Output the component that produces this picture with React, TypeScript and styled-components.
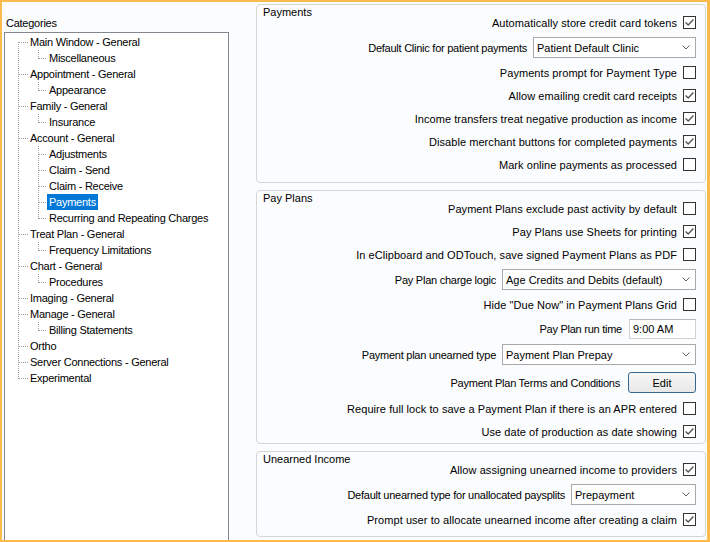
import React from 'react';
import styled, { createGlobalStyle } from 'styled-components';

const GlobalStyle = createGlobalStyle`
  html, body { margin: 0; padding: 0; }
  body {
    font-family: "Liberation Sans", Arial, sans-serif;
    font-size: 11px;
    color: #000;
  }
`;

const Frame = styled.div`
  width: 710px;
  height: 542px;
  box-sizing: border-box;
  border: 2px solid #fdbb4d;
  border-right-width: 3px;
  background: #fbfcfe;
  display: flex;
  overflow: hidden;
`;

const LeftColumn = styled.div`
  width: 225px;
  margin-left: 2px;
  padding-top: 14px;
  display: flex;
  flex-direction: column;
`;

const CategoryLabel = styled.div`
  height: 16px;
  line-height: 14px;
  padding-left: 2px;
  letter-spacing: -0.25px;
`;

const TreeBox = styled.div`
  flex: 1;
  background: #fff;
  border: 1px solid #828790;
  border-bottom: none;
  padding-top: 1px;
`;

const TreeRow = styled.div<{ $level: number }>`
  position: relative;
  height: 16px;
  display: flex;
  align-items: center;
  padding-left: ${(p) => (p.$level === 0 ? 23 : 42)}px;
  white-space: nowrap;
`;

const ItemText = styled.span<{ $selected?: boolean }>`
  padding: 0 2px;
  height: 16px;
  line-height: 16px;
  letter-spacing: -0.25px;
  background: ${(p) => (p.$selected ? '#0078d7' : 'transparent')};
  color: ${(p) => (p.$selected ? '#fff' : '#000')};
`;

const VDots = styled.span<{ $x: number; $top: number; $h: number }>`
  position: absolute;
  left: ${(p) => p.$x}px;
  top: ${(p) => p.$top}px;
  height: ${(p) => p.$h}px;
  width: 1px;
  background-image: repeating-linear-gradient(to bottom, #a0a0a0 0 1px, transparent 1px 2px);
`;

const HDots = styled.span<{ $x: number; $w: number }>`
  position: absolute;
  left: ${(p) => p.$x}px;
  top: 8px;
  width: ${(p) => p.$w}px;
  height: 1px;
  background-image: repeating-linear-gradient(to right, #a0a0a0 0 1px, transparent 1px 2px);
`;

const RightColumn = styled.div`
  width: 450px;
  margin-left: 27px;
  padding-top: 2px;
  display: flex;
  flex-direction: column;
  gap: 7px;
`;

const Group = styled.section<{ $height: number }>`
  height: ${(p) => p.$height}px;
  box-sizing: border-box;
  border: 1px solid #d6d6d6;
  border-radius: 4px;
  display: flex;
  flex-direction: column;
`;

const GroupTitle = styled.div`
  height: 6px;
  line-height: 14px;
  padding-left: 6px;
  white-space: nowrap;
  overflow: visible;
`;

const Row = styled.div<{ $h: number }>`
  height: ${(p) => p.$h}px;
  flex-shrink: 0;
  display: flex;
  align-items: center;
  justify-content: flex-end;
  gap: 6px;
  padding-right: 9px;
  white-space: nowrap;
`;

const CheckLabel = styled.span`
  line-height: 14px;
  letter-spacing: 0.06px;
`;

const Label = styled.span<{ $gap?: number }>`
  line-height: 14px;
  letter-spacing: -0.25px;
  margin-right: ${(p) => p.$gap ?? 0}px;
`;

const Select = styled.div<{ $w: number }>`
  width: ${(p) => p.$w}px;
  height: 21px;
  box-sizing: border-box;
  border: 1px solid #a9a9a9;
  background: #fff;
  display: flex;
  align-items: center;
  justify-content: space-between;
  padding: 0 5px 0 3px;
`;

const TextBox = styled.div`
  width: 67px;
  height: 20px;
  box-sizing: border-box;
  border: 1px solid #d2d2d2;
  border-top-color: #b8b8b8;
  background: #fff;
  display: flex;
  align-items: center;
  padding-left: 3px;
`;

const Button = styled.button`
  width: 68px;
  height: 21px;
  box-sizing: border-box;
  border: 1px solid #39678f;
  border-radius: 3px;
  background: linear-gradient(to bottom, #f7f7f7, #e8e8e8);
  font: inherit;
  color: #000;
  padding: 0;
  line-height: 18px;
`;

const Check = ({ checked }: { checked: boolean }) => (
  <svg width="13" height="13" viewBox="0 0 13 13" style={{ flexShrink: 0 }}>
    <rect x="0.5" y="0.5" width="12" height="12" fill="#fff" stroke="#333" />
    {checked && (
      <polyline points="2.6,6.4 5.2,9 10.4,3.6" fill="none" stroke="#555" strokeWidth="1.4" />
    )}
  </svg>
);

const Chevron = () => (
  <svg width="8" height="5" viewBox="0 0 8 5">
    <polyline points="0.5,0.5 4,4 7.5,0.5" fill="none" stroke="#606060" strokeWidth="1" />
  </svg>
);

type TreeNode = { label: string; children?: string[] };

const tree: TreeNode[] = [
  { label: 'Main Window - General', children: ['Miscellaneous'] },
  { label: 'Appointment - General', children: ['Appearance'] },
  { label: 'Family - General', children: ['Insurance'] },
  {
    label: 'Account - General',
    children: ['Adjustments', 'Claim - Send', 'Claim - Receive', 'Payments', 'Recurring and Repeating Charges'],
  },
  { label: 'Treat Plan - General', children: ['Frequency Limitations'] },
  { label: 'Chart - General', children: ['Procedures'] },
  { label: 'Imaging - General' },
  { label: 'Manage - General', children: ['Billing Statements'] },
  { label: 'Ortho' },
  { label: 'Server Connections - General' },
  { label: 'Experimental' },
];

type FlatRow = { label: string; level: number; lastChild: boolean };

const flatRows: FlatRow[] = [];
tree.forEach((n) => {
  flatRows.push({ label: n.label, level: 0, lastChild: false });
  (n.children || []).forEach((c, i, arr) =>
    flatRows.push({ label: c, level: 1, lastChild: i === arr.length - 1 })
  );
});

const Tree = () => (
  <TreeBox>
    {flatRows.map((r, i) => {
      const first = i === 0;
      const last = i === flatRows.length - 1;
      return (
        <TreeRow key={r.label} $level={r.level}>
          <VDots $x={13} $top={first ? 8 : 0} $h={first ? 8 : last ? 9 : 16} />
          {r.level === 0 ? (
            <HDots $x={14} $w={9} />
          ) : (
            <>
              <VDots $x={33} $top={0} $h={r.lastChild ? 9 : 16} />
              <HDots $x={34} $w={8} />
            </>
          )}
          <ItemText $selected={r.label === 'Payments'}>{r.label}</ItemText>
        </TreeRow>
      );
    })}
  </TreeBox>
);

const CheckRow = ({ label, checked, h = 23 }: { label: string; checked: boolean; h?: number }) => (
  <Row $h={h}>
    <CheckLabel>{label}</CheckLabel>
    <Check checked={checked} />
  </Row>
);

const SelectRow = ({ label, value, w, h = 27 }: { label: string; value: string; w: number; h?: number }) => (
  <Row $h={h}>
    <Label>{label}</Label>
    <Select $w={w}>
      <span>{value}</span>
      <Chevron />
    </Select>
  </Row>
);

export default function App() {
  return (
    <>
      <GlobalStyle />
      <Frame>
        <LeftColumn>
          <CategoryLabel>Categories</CategoryLabel>
          <Tree />
        </LeftColumn>
        <RightColumn>
          <Group $height={179}>
            <GroupTitle>Payments</GroupTitle>
            <CheckRow label="Automatically store credit card tokens" checked />
            <SelectRow label="Default Clinic for patient payments" value="Patient Default Clinic" w={163} />
            <CheckRow label="Payments prompt for Payment Type" checked={false} />
            <CheckRow label="Allow emailing credit card receipts" checked />
            <CheckRow label="Income transfers treat negative production as income" checked />
            <CheckRow label="Disable merchant buttons for completed payments" checked />
            <CheckRow label="Mark online payments as processed" checked={false} />
          </Group>
          <Group $height={254}>
            <GroupTitle>Pay Plans</GroupTitle>
            <CheckRow label="Payment Plans exclude past activity by default" checked={false} />
            <CheckRow label="Pay Plans use Sheets for printing" checked />
            <CheckRow label="In eClipboard and ODTouch, save signed Payment Plans as PDF" checked={false} />
            <SelectRow label="Pay Plan charge logic" value="Age Credits and Debits (default)" w={194} />
            <CheckRow label={'Hide "Due Now" in Payment Plans Grid'} checked={false} />
            <Row $h={25}>
              <Label $gap={1}>Pay Plan run time</Label>
              <TextBox>9:00 AM</TextBox>
            </Row>
            <SelectRow label="Payment plan unearned type" value="Payment Plan Prepay" w={194} />
            <Row $h={29}>
              <Label $gap={2}>Payment Plan Terms and Conditions</Label>
              <Button>Edit</Button>
            </Row>
            <CheckRow label="Require full lock to save a Payment Plan if there is an APR entered" checked={false} />
            <CheckRow label="Use date of production as date showing" checked />
          </Group>
          <Group $height={86}>
            <GroupTitle>Unearned Income</GroupTitle>
            <CheckRow label="Allow assigning unearned income to providers" checked />
            <SelectRow label="Default unearned type for unallocated paysplits" value="Prepayment" w={125} />
            <CheckRow label="Prompt user to allocate unearned income after creating a claim" checked />
          </Group>
        </RightColumn>
      </Frame>
    </>
  );
}
